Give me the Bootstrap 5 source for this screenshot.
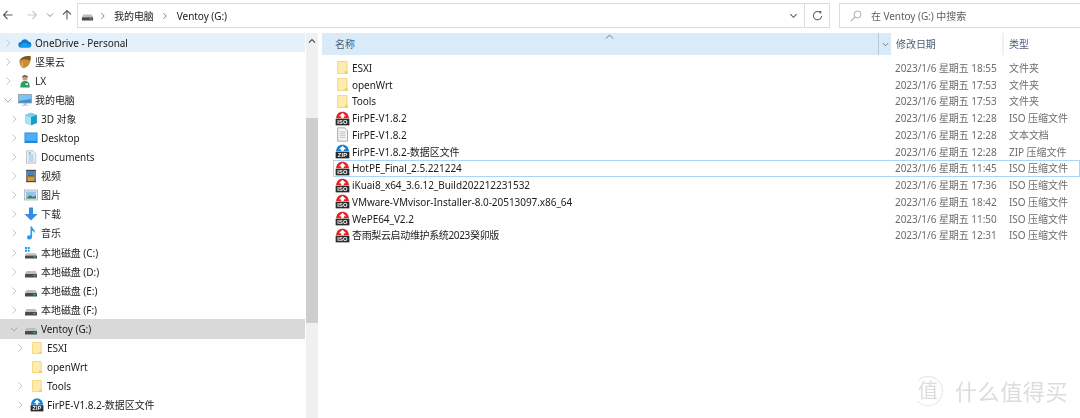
<!DOCTYPE html>
<html lang="zh-CN">
<head>
<meta charset="utf-8">
<title>Ventoy (G:)</title>
<link href="https://cdn.jsdelivr.net/npm/bootstrap@5.3.0/dist/css/bootstrap.min.css" rel="stylesheet">
<style>
html,body{height:418px;overflow:hidden;background:#fff}
body{font-family:"Noto Sans","Noto Sans CJK SC",sans-serif;font-size:10px;letter-spacing:-.05px;line-height:1;color:#1c1c1c;position:relative}
.shot{height:418px;filter:blur(.3px)}
.topbar{height:33px;padding-top:3px}
.navbtns{width:77px;height:24px}
.addr{height:25px;width:753px;border:1px solid #dcdcdc}
.addr-path{padding-left:3px}
.refresh{width:25px;height:23px;border-left:1px solid #dcdcdc}
.search{margin-left:9px;width:241px;height:25px;border:1px solid #dcdcdc;border-right:0;color:#5f5f5f}
.search svg{margin-left:10px;margin-right:9px}
.tree{width:305px}
.tree-row{height:19.1px;white-space:nowrap}
.lv0{padding-left:3px}.lv1{padding-left:9px}.lv2{padding-left:15px}
.chev{width:10px;height:10px;margin-right:5px;flex:none}
.ico{width:14px;height:14px;margin-right:3px;flex:none}
.hover-row{background:#e4f1fb}
.cur-row{background:#d9d9d9}
.vscroll{width:12px;margin-left:1px;background:#f0f0f0;position:relative}
.vscroll-btn{height:15px}
.vscroll-thumb{height:205px;margin-top:70px;background:#cdcdcd}
.pane{margin-left:4px;min-width:0}
.col-head{height:22px;color:#4c607a}
.hd-name{width:556px;background:#d9ebf9;padding-left:13px;position:relative}
.hd-sort{width:13px;background:#d9ebf9;border-left:1px solid #b5c9da}
.hd-date{width:113px;padding-left:5px;background:#fff;border-right:2px solid #f0f0f0;height:22px}
.hd-type{padding-left:5px}
.sort-caret{position:absolute;left:283px;top:1px}
.files{padding-top:4.6px}
.file-row{height:16.75px;white-space:nowrap;border:1px solid transparent;margin-left:11px;position:relative}
.file-row.sel{border-color:#a9d5f7}
.f-name{width:561px;display:flex;align-items:center;padding-left:1px}
.f-ico{width:15px;height:15px;margin-right:2px;flex:none}
.f-tight{letter-spacing:-.35px}
.f-date{width:114px;color:#6d6d6d}
.f-type{color:#6d6d6d}
.badge-txt{font-family:"Liberation Sans",sans-serif;font-weight:700;font-size:5.4px;letter-spacing:.2px;fill:#fff;text-anchor:middle}
.mark-wm{position:absolute;right:12px;bottom:12px;color:#dcdcdc;font-size:22px;letter-spacing:.6px;display:flex;align-items:center;gap:12px;filter:blur(.3px)}
.mark-ring{width:30px;height:30px;border-radius:50%;border:1px solid #e4e4e4;border-left-color:transparent;display:flex;align-items:center;justify-content:center;font-size:20px;letter-spacing:0}
</style>
</head>
<body>
<svg width="0" height="0" class="position-absolute">
  <defs>
    <symbol id="c-r" viewBox="0 0 10 10"><path d="M3.5 1.5 7 5 3.5 8.500" fill="none" stroke="#c6c6c6" stroke-width="1"/></symbol>
    <symbol id="c-d" viewBox="0 0 10 10"><path d="M1.500 3.500 5 7 8.500 3.500" fill="none" stroke="#a8a8a8" stroke-width="1"/></symbol>
    <symbol id="folder" viewBox="0 0 14 14"><path d="M2 1h9.500v12H2z" fill="#fde28f"/><path d="M2.500 1.500h8.500v11H2.500z" fill="#ffedb0" stroke="#f5d67e" stroke-width=".8"/><path d="M9 10.500h3V13H9z" fill="#f4cf6d"/></symbol>
    <symbol id="iso" viewBox="0 0 14 14"><path d="M7 .6C3.500.6 1.200 3 1 6.800h12C12.800 3 10.500.6 7 .6z" fill="#e32227"/><path d="M7 1.600 10.400 4.900 8.400 4.800 8 6.800 6 6.800 5.600 4.800 3.600 4.900z" fill="#fff"/><rect x=".6" y="7.200" width="12.800" height="6.200" fill="#2b2b2b"/><text x="7" y="12.300" class="badge-txt">ISO</text></symbol>
    <symbol id="zip" viewBox="0 0 14 14"><path d="M7 .6C3.500.6 1.200 3 1 6.800h12C12.800 3 10.500.6 7 .6z" fill="#0f7fd8"/><path d="M7 1.600 10.400 4.900 8.400 4.800 8 6.800 6 6.800 5.600 4.800 3.600 4.900z" fill="#fff"/><rect x=".6" y="7.200" width="12.800" height="6.200" fill="#2b2b2b"/><text x="7" y="12.300" class="badge-txt">ZIP</text></symbol>
    <symbol id="txt" viewBox="0 0 14 14"><path d="M2.500.8h6.500l2.700 2.700v9.700H2.500z" fill="#f6f6f6" stroke="#9c9c9c" stroke-width=".8"/><path d="M4.300 4.500h5.500M4.300 6.300h5.500M4.300 8.100h5.500M4.300 9.900h5.500" stroke="#b5b5b5" stroke-width=".7"/></symbol>
    <symbol id="drive" viewBox="0 0 14 14"><path d="M2.500 6h9l1.500 3H1z" fill="#bdbdbd"/><rect x="1" y="9" width="12" height="3.500" rx=".5" fill="#4a4a4a"/><rect x="9.500" y="10" width="2" height="1.200" fill="#3fc95a"/></symbol>
    <symbol id="sysdrive" viewBox="0 0 14 14"><path d="M1 1h2v2H1zM3.700 1h2v2h-2zM1 3.700h2v2H1zM3.700 3.700h2v2h-2z" fill="#1e9be8"/><path d="M2.500 7h9l1.500 2.500H1z" fill="#c6c6c6"/><rect x="1" y="9.500" width="12" height="3" rx=".5" fill="#4a4a4a"/><rect x="9.500" y="10.300" width="2" height="1.200" fill="#3fc95a"/></symbol>
    <symbol id="onedrive" viewBox="0 0 14 14"><path d="M3.200 11.500A2.700 2.700 0 0 1 3 6.100 4 4 0 0 1 10.400 5.400 3.100 3.100 0 0 1 11 11.500z" fill="#0f78d4"/><path d="M3.200 11.500A2 2 0 0 1 3.400 8L7 6.800 13.500 9.500A2.500 2.500 0 0 1 11 11.500z" fill="#1a9be8"/></symbol>
    <symbol id="nut" viewBox="0 0 14 14"><path d="M1.500 5.500C3 2 8 .8 12.500 1.200 13.500 6 11 12.500 5 13.300 2.500 11.500 1 8 1.500 5.500z" fill="#c98b35"/><path d="M1.500 5.500C3.500 1.800 8.500.5 12.500 1.200 12.800 3 12.500 4.500 12 5.500 8.500 3.800 5 4 1.500 5.500z" fill="#7d5424"/><path d="M4 7.500c0 2 .5 3.500 1.500 4.500" stroke="#eec07b" stroke-width="1" fill="none"/></symbol>
    <symbol id="user" viewBox="0 0 14 14"><circle cx="7" cy="3.800" r="2.800" fill="#c99f7d"/><path d="M4.200 3.200C4.500.8 9.500.8 9.800 3.200 8 2.200 6 2.200 4.200 3.200z" fill="#3b3b3b"/><path d="M2.300 13.500C2.300 8.500 4 7 7 7s4.700 1.500 4.700 6.500z" fill="#2f9c62"/><rect x="7.500" y="9.500" width="2.500" height="1.500" fill="#fff"/></symbol>
    <symbol id="pc" viewBox="0 0 14 14"><rect x=".5" y="1.500" width="13" height="8.500" fill="#3e8fd8" stroke="#8e9aa5" stroke-width=".7"/><path d="M1 2h12v4L1 8z" fill="#7cc4f2"/><rect x="5.500" y="10" width="3" height="2" fill="#b9c1c8"/><rect x="3.500" y="12" width="7" height="1" fill="#d1d6da"/></symbol>
    <symbol id="cube" viewBox="0 0 14 14"><path d="M7 .8 12.800 3v8L7 13.300 1.200 11V3z" fill="#3fb7dd"/><path d="M1.200 3 7 5.300v8L1.200 11z" fill="#a7e3f5"/><path d="M7 .8 12.800 3 7 5.300 1.200 3z" fill="#74d0ec"/><path d="M7 5.300 12.800 3v8L7 13.300z" fill="#1f9bc8"/></symbol>
    <symbol id="desk" viewBox="0 0 14 14"><rect x=".5" y="1.500" width="13" height="10.500" fill="#1e88dc"/><rect x="1.300" y="2.300" width="11.400" height="7.500" fill="#4cb0f2"/></symbol>
    <symbol id="docs" viewBox="0 0 14 14"><path d="M2.500.8h6.500l2.700 2.700v9.700H2.500z" fill="#eef1f3" stroke="#a9b0b6" stroke-width=".7"/><path d="M4.500 5h5M4.500 7h5M4.500 9h5M4.500 11h5" stroke="#6fb1dd" stroke-width=".8"/><path d="M4.500 2.300h2.500v1.500H4.500z" fill="#6fb1dd"/></symbol>
    <symbol id="video" viewBox="0 0 14 14"><rect x="2" y=".8" width="10" height="12.400" fill="#4a4a4a"/><rect x="4" y="2" width="6" height="4.500" fill="#3f85c9"/><rect x="4" y="7.500" width="6" height="4.500" fill="#dd9a2a"/><path d="M2.600 2h.8v10h-.8zM10.600 2h.8v10h-.8z" fill="#ccc"/></symbol>
    <symbol id="pics" viewBox="0 0 14 14"><rect x=".5" y="2" width="13" height="10" fill="#e8edf1" stroke="#9da7af" stroke-width=".7"/><rect x="2" y="3.500" width="10" height="7" fill="#8fc6ec"/><path d="M2 10.500 6 7.300 9 9l3-1.300v2.800z" fill="#49784a"/></symbol>
    <symbol id="down" viewBox="0 0 14 14"><path d="M5 .5h4v6.500h4.500L7 13.500.5 7H5z" fill="#2f8fe3"/></symbol>
    <symbol id="music" viewBox="0 0 14 14"><path d="M6.500.6h1.600c.2 2.600 3.500 3.400 3 6.600C10.400 5.700 9.300 5 8.100 4.800v6.300c0 1.500-1.300 2.500-2.700 2.500S3 12.700 3 11.300 4.400 9 6.500 9.500z" fill="#2a9ae8"/></symbol>
  </defs>
</svg>

<div class="shot d-flex flex-column">
  <div class="topbar d-flex align-items-start flex-none">
    <div class="navbtns d-flex align-items-center" aria-label="导航">
      <svg width="12" height="12" viewBox="0 0 12 12" style="margin-left:2px"><path d="M10.500 6H1.500M5.500 2 1.500 6l4 4" fill="none" stroke="#5e5e5e" stroke-width="1.100"/></svg>
      <svg width="12" height="12" viewBox="0 0 12 12" style="margin-left:12px"><path d="M1.500 6h9M6.500 2l4 4-4 4" fill="none" stroke="#c9c9c9" stroke-width="1.100"/></svg>
      <svg width="8" height="8" viewBox="0 0 8 8" style="margin-left:8px"><path d="M1 2.500 4 5.500 7 2.500" fill="none" stroke="#8a8a8a" stroke-width="1"/></svg>
      <svg width="12" height="12" viewBox="0 0 12 12" style="margin-left:7px"><path d="M6 10.500v-9M2 5.500l4-4 4 4" fill="none" stroke="#5e5e5e" stroke-width="1.100"/></svg>
    </div>
    <div class="addr d-flex align-items-center">
      <div class="addr-path d-flex align-items-center flex-grow-1">
        <svg class="ico" style="width:13px;height:13px;margin-right:5px"><use href="#drive"/></svg>
        <svg width="8" height="8" viewBox="0 0 10 10"><path d="M3 1.500 6.500 5 3 8.500" fill="none" stroke="#7a7a7a" stroke-width="1.200"/></svg>
        <span style="margin-left:7px">我的电脑</span>
        <svg width="8" height="8" viewBox="0 0 10 10" style="margin-left:7px"><path d="M3 1.500 6.500 5 3 8.500" fill="none" stroke="#7a7a7a" stroke-width="1.200"/></svg>
        <span style="margin-left:8px">Ventoy (G:)</span>
      </div>
      <svg width="9" height="9" viewBox="0 0 10 10" style="margin-right:6px"><path d="M1.500 3.500 5 7 8.500 3.500" fill="none" stroke="#5e5e5e" stroke-width="1.200"/></svg>
      <div class="refresh d-flex align-items-center justify-content-center">
        <svg width="11" height="11" viewBox="0 0 12 12"><path d="M9.500 3.300A4.500 4.500 0 1 0 10.500 6.500" fill="none" stroke="#5e5e5e" stroke-width="1.100"/><path d="M6.800 1.200 10 1v3.400z" fill="#5e5e5e"/></svg>
      </div>
    </div>
    <div class="search d-flex align-items-center">
      <svg width="12" height="12" viewBox="0 0 12 12"><circle cx="7.500" cy="4.500" r="3.500" fill="none" stroke="#a9a9a9" stroke-width="1"/><path d="M5 7 1 11" stroke="#c9a98a" stroke-width="1.100"/></svg>
      <span>在 Ventoy (G:) 中搜索</span>
    </div>
  </div>

  <div class="d-flex flex-grow-1 overflow-hidden">
    <div class="tree">
      <div class="tree-row lv0 hover-row d-flex align-items-center"><svg class="chev"><use href="#c-r"/></svg><svg class="ico"><use href="#onedrive"/></svg>OneDrive - Personal</div>
      <div class="tree-row lv0 d-flex align-items-center"><svg class="chev"><use href="#c-r"/></svg><svg class="ico"><use href="#nut"/></svg>坚果云</div>
      <div class="tree-row lv0 d-flex align-items-center"><svg class="chev"><use href="#c-r"/></svg><svg class="ico"><use href="#user"/></svg>LX</div>
      <div class="tree-row lv0 d-flex align-items-center"><svg class="chev"><use href="#c-d"/></svg><svg class="ico"><use href="#pc"/></svg>我的电脑</div>
      <div class="tree-row lv1 d-flex align-items-center"><svg class="chev"><use href="#c-r"/></svg><svg class="ico"><use href="#cube"/></svg>3D 对象</div>
      <div class="tree-row lv1 d-flex align-items-center"><svg class="chev"><use href="#c-r"/></svg><svg class="ico"><use href="#desk"/></svg>Desktop</div>
      <div class="tree-row lv1 d-flex align-items-center"><svg class="chev"><use href="#c-r"/></svg><svg class="ico"><use href="#docs"/></svg>Documents</div>
      <div class="tree-row lv1 d-flex align-items-center"><svg class="chev"><use href="#c-r"/></svg><svg class="ico"><use href="#video"/></svg>视频</div>
      <div class="tree-row lv1 d-flex align-items-center"><svg class="chev"><use href="#c-r"/></svg><svg class="ico"><use href="#pics"/></svg>图片</div>
      <div class="tree-row lv1 d-flex align-items-center"><svg class="chev"><use href="#c-r"/></svg><svg class="ico"><use href="#down"/></svg>下载</div>
      <div class="tree-row lv1 d-flex align-items-center"><svg class="chev"><use href="#c-r"/></svg><svg class="ico"><use href="#music"/></svg>音乐</div>
      <div class="tree-row lv1 d-flex align-items-center"><svg class="chev"><use href="#c-r"/></svg><svg class="ico"><use href="#sysdrive"/></svg>本地磁盘 (C:)</div>
      <div class="tree-row lv1 d-flex align-items-center"><svg class="chev"><use href="#c-r"/></svg><svg class="ico"><use href="#drive"/></svg>本地磁盘 (D:)</div>
      <div class="tree-row lv1 d-flex align-items-center"><svg class="chev"><use href="#c-r"/></svg><svg class="ico"><use href="#drive"/></svg>本地磁盘 (E:)</div>
      <div class="tree-row lv1 d-flex align-items-center"><svg class="chev"><use href="#c-r"/></svg><svg class="ico"><use href="#drive"/></svg>本地磁盘 (F:)</div>
      <div class="tree-row lv1 cur-row d-flex align-items-center"><svg class="chev"><use href="#c-d"/></svg><svg class="ico"><use href="#drive"/></svg>Ventoy (G:)</div>
      <div class="tree-row lv2 d-flex align-items-center"><svg class="chev"><use href="#c-r"/></svg><svg class="ico"><use href="#folder"/></svg>ESXI</div>
      <div class="tree-row lv2 d-flex align-items-center"><span class="chev"></span><svg class="ico"><use href="#folder"/></svg>openWrt</div>
      <div class="tree-row lv2 d-flex align-items-center"><svg class="chev"><use href="#c-r"/></svg><svg class="ico"><use href="#folder"/></svg>Tools</div>
      <div class="tree-row lv2 d-flex align-items-center"><svg class="chev"><use href="#c-r"/></svg><svg class="ico"><use href="#zip"/></svg>FirPE-V1.8.2-数据区文件</div>
    </div>

    <div class="vscroll flex-none">
      <div class="vscroll-btn d-flex align-items-center justify-content-center"><svg width="8" height="8" viewBox="0 0 8 8"><path d="M1 5.500 4 2.500 7 5.500" fill="none" stroke="#555" stroke-width="1.200"/></svg></div>
      <div class="vscroll-thumb"></div>
    </div>

    <div class="pane flex-grow-1">
      <div class="col-head d-flex align-items-center">
        <div class="hd-name h-100 d-flex align-items-center">名称<svg class="sort-caret" width="9" height="6" viewBox="0 0 9 6"><path d="M1 4.500 4.500 1 8 4.500" fill="none" stroke="#6d7a88" stroke-width="1"/></svg></div>
        <div class="hd-sort h-100 d-flex align-items-center justify-content-center"><svg width="7" height="7" viewBox="0 0 8 8"><path d="M1 2.500 4 5.500 7 2.500" fill="none" stroke="#5e6b78" stroke-width="1"/></svg></div>
        <div class="hd-date d-flex align-items-center">修改日期</div>
        <div class="hd-type">类型</div>
      </div>
      <div class="files">
        <div class="file-row d-flex align-items-center"><div class="f-name"><svg class="f-ico"><use href="#folder"/></svg>ESXI</div><div class="f-date">2023/1/6 星期五 18:55</div><div class="f-type">文件夹</div></div>
        <div class="file-row d-flex align-items-center"><div class="f-name"><svg class="f-ico"><use href="#folder"/></svg>openWrt</div><div class="f-date">2023/1/6 星期五 17:53</div><div class="f-type">文件夹</div></div>
        <div class="file-row d-flex align-items-center"><div class="f-name"><svg class="f-ico"><use href="#folder"/></svg>Tools</div><div class="f-date">2023/1/6 星期五 17:53</div><div class="f-type">文件夹</div></div>
        <div class="file-row d-flex align-items-center"><div class="f-name"><svg class="f-ico"><use href="#iso"/></svg>FirPE-V1.8.2</div><div class="f-date">2023/1/6 星期五 12:28</div><div class="f-type">ISO 压缩文件</div></div>
        <div class="file-row d-flex align-items-center"><div class="f-name"><svg class="f-ico"><use href="#txt"/></svg>FirPE-V1.8.2</div><div class="f-date">2023/1/6 星期五 12:28</div><div class="f-type">文本文档</div></div>
        <div class="file-row d-flex align-items-center"><div class="f-name"><svg class="f-ico"><use href="#zip"/></svg>FirPE-V1.8.2-数据区文件</div><div class="f-date">2023/1/6 星期五 12:28</div><div class="f-type">ZIP 压缩文件</div></div>
        <div class="file-row sel d-flex align-items-center"><div class="f-name"><svg class="f-ico"><use href="#iso"/></svg>HotPE_Final_2.5.221224</div><div class="f-date">2023/1/6 星期五 11:45</div><div class="f-type">ISO 压缩文件</div></div>
        <div class="file-row d-flex align-items-center"><div class="f-name"><svg class="f-ico"><use href="#iso"/></svg>iKuai8_x64_3.6.12_Build202212231532</div><div class="f-date">2023/1/6 星期五 17:36</div><div class="f-type">ISO 压缩文件</div></div>
        <div class="file-row d-flex align-items-center"><div class="f-name"><svg class="f-ico"><use href="#iso"/></svg>VMware-VMvisor-Installer-8.0-20513097.x86_64</div><div class="f-date">2023/1/6 星期五 18:42</div><div class="f-type">ISO 压缩文件</div></div>
        <div class="file-row d-flex align-items-center"><div class="f-name"><svg class="f-ico"><use href="#iso"/></svg>WePE64_V2.2</div><div class="f-date">2023/1/6 星期五 11:50</div><div class="f-type">ISO 压缩文件</div></div>
        <div class="file-row d-flex align-items-center"><div class="f-name"><svg class="f-ico"><use href="#iso"/></svg><span class="f-tight">杏雨梨云启动维护系统2023癸卯版</span></div><div class="f-date">2023/1/6 星期五 12:31</div><div class="f-type">ISO 压缩文件</div></div>
      </div>
    </div>
  </div>
</div>
<div class="mark-wm"><span class="mark-ring">值</span><span>什么值得买</span></div>
</body>
</html>
